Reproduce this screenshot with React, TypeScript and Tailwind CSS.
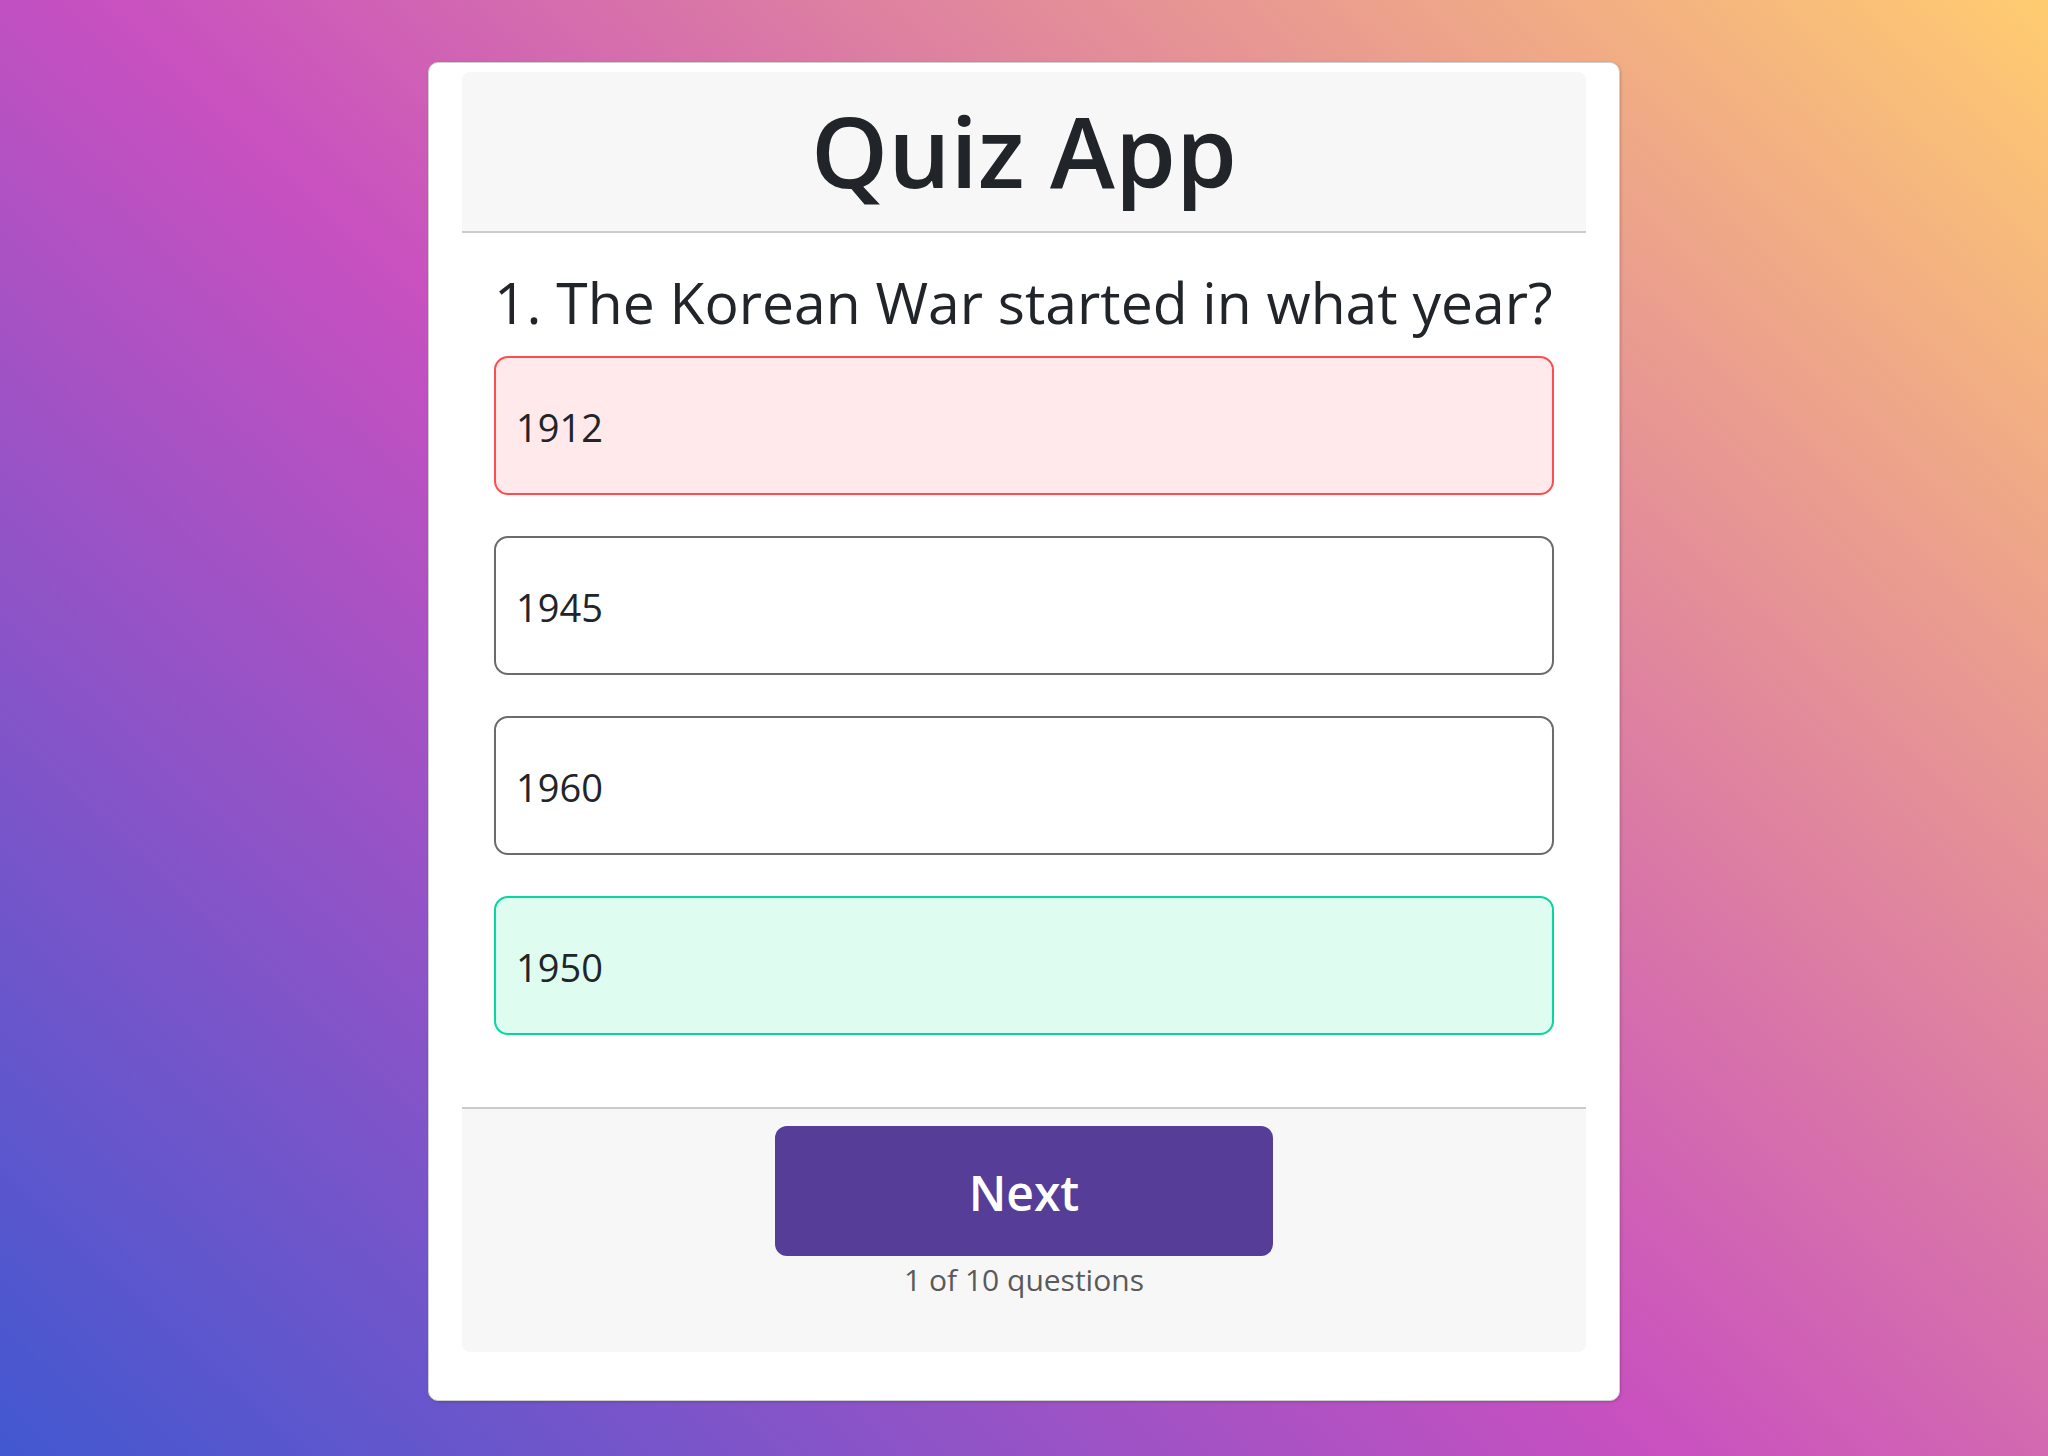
import React from "react";

const options = [
  { label: "1912", state: "wrong" },
  { label: "1945", state: "neutral" },
  { label: "1960", state: "neutral" },
  { label: "1950", state: "correct" },
];

export default function App() {
  return (
    <div
      className="min-h-screen w-full bg-[linear-gradient(43deg,#4158D0_0%,#C850C0_46%,#FFCC70_100%)] pt-[62px] pb-[54px]"
      style={{ fontFamily: '"Open Sans", "Noto Sans", sans-serif' }}
    >
      <div className="mx-auto w-[1192px] rounded-[10px] border border-[#cfcfcf] bg-white px-[33px] pt-[9px] pb-[48px] shadow-[1px_1px_3px_rgba(0,0,0,0.18)]">
        <div className="flex h-[161px] items-center justify-center rounded-t-[8px] border-b-2 border-[#cccccc] bg-[#f7f7f7]">
          <h1 className="-mt-[4px] text-[98px] font-semibold leading-none text-[#212529]">Quiz App</h1>
        </div>
        <div className="px-[32px] pt-[36px] pb-[72px]">
          <h2 className="text-[57px] font-normal leading-[67px] text-[#212529]">
            1. The Korean War started in what year?
          </h2>
          <div className="mt-[20px] flex flex-col gap-[41px]">
            {options.map((o) =>
              o.state === "wrong" ? (
                <div
                  key={o.label}
                  className="flex h-[139px] items-center rounded-[14px] border-2 border-[#ff4d4f] bg-[#ffe9ea] px-[20px] pt-[4px] text-[38px] text-[#212529]"
                >
                  {o.label}
                </div>
              ) : o.state === "correct" ? (
                <div
                  key={o.label}
                  className="flex h-[139px] items-center rounded-[14px] border-2 border-[#06d6a0] bg-[#defdf0] px-[20px] pt-[4px] text-[38px] text-[#212529]"
                >
                  {o.label}
                </div>
              ) : (
                <div
                  key={o.label}
                  className="flex h-[139px] items-center rounded-[14px] border-2 border-[#6b6b6b] bg-white px-[20px] pt-[4px] text-[38px] text-[#212529]"
                >
                  {o.label}
                </div>
              )
            )}
          </div>
        </div>
        <div className="flex flex-col items-center rounded-b-[8px] border-t-2 border-[#cccccc] bg-[#f7f7f7] pt-[17px] pb-[52px]">
          <button className="flex h-[130px] w-[498px] items-center justify-center rounded-[12px] bg-[#563d98] pt-[4px] text-[48px] font-semibold text-white">
            Next
          </button>
          <p className="mt-[4px] text-[30px] leading-[40px] text-[#5a5a5a]">1 of 10 questions</p>
        </div>
      </div>
    </div>
  );
}
